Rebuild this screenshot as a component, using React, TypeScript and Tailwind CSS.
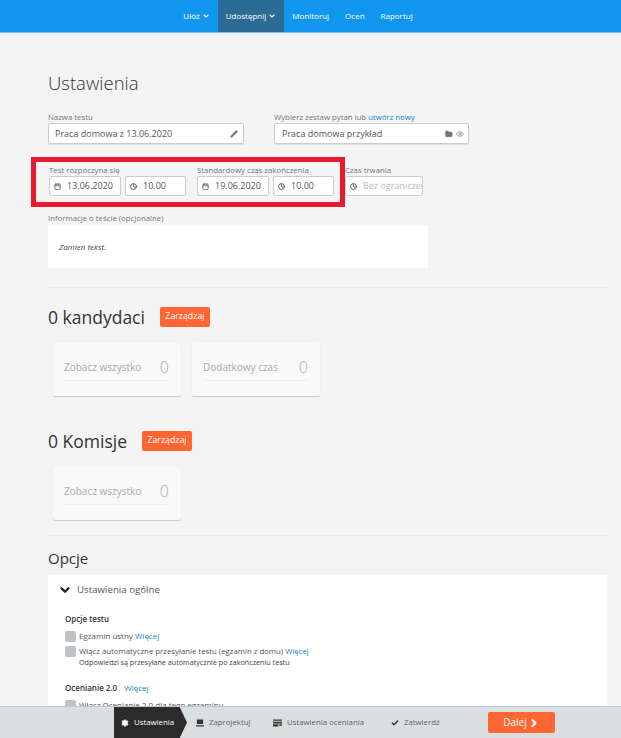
import { ChevronDown, ChevronRight, Pencil, FolderOpen, Eye, Calendar, Clock, Settings, Check } from "lucide-react";

const navItems = [
  { label: "Ułóż", caret: true },
  { label: "Udostępnij", caret: true, active: true },
  { label: "Monitoruj" },
  { label: "Oceń" },
  { label: "Raportuj" },
];

function Label({ children }: { children: React.ReactNode }) {
  return <div className="h-[10px] text-[7.8px] leading-[10px] text-[#777] whitespace-nowrap">{children}</div>;
}

function DateField({ value, time, w }: { value: string; time?: boolean; w: string }) {
  return (
    <div className={`mt-[1px] flex h-[20px] items-center rounded-[2px] border border-[#ccc] bg-white pl-[4px] text-[9px] text-[#555] ${w}`}>
      {time ? <Clock size={7} strokeWidth={3} className="text-[#444]" /> : <Calendar size={7} strokeWidth={3} className="text-[#666]" />}
      <span className="ml-[6px]">{value}</span>
    </div>
  );
}

function StatCard({ label }: { label: string }) {
  return (
    <div className="h-[53px] w-[128px] rounded-[2px] bg-[#f9f9f9] px-[11px] pt-[15px] shadow-[0_1px_1px_#c8c8c8]">
      <div className="flex h-[23px] items-start justify-between border-b border-[#f0f0f0] text-[#aaa]">
        <span className="mt-[2px] text-[10px] leading-[14px]">{label}</span>
        <span className="mr-[1px] text-[16px] leading-[18px] font-light">0</span>
      </div>
    </div>
  );
}

function ManageHeading({ title }: { title: string }) {
  return (
    <div className="flex h-[20px] items-center">
      <h2 className="text-[17.5px] leading-[20px] font-normal text-[#333]">{title}</h2>
      <button className="ml-[15px] h-[20px] w-[50px] rounded-[2px] bg-[#ff6633] text-[8.8px] text-white">Zarządzaj</button>
    </div>
  );
}

function Box() {
  return <span className="h-[11px] w-[11px] shrink-0 rounded-[2px] bg-[#bcc3c8]" />;
}

const designIcon = (
  <svg width="8" height="8" viewBox="0 0 9 8" fill="#333" className="block">
    <path d="M1 0h7v5H1zM0 6.5h9V8H0z" />
  </svg>
);

const gradingIcon = (
  <svg width="9" height="8" viewBox="0 0 10 8" fill="#333" className="block">
    <path d="M0 0h10v1.5H0zM0 2.5h10v2H0zM0 5.5h6V8H0zM7 5.5h3V7H7z" />
  </svg>
);

const steps = [
  { label: "Zaprojektuj", icon: designIcon, w: "w-[77px]" },
  { label: "Ustawienia oceniania", icon: gradingIcon, w: "w-[118px]" },
  { label: "Zatwierdź", icon: <Check size={8} strokeWidth={4} />, w: "w-[67px]" },
];

export default function App() {
  return (
    <div className="relative h-[738px] w-[621px] overflow-hidden bg-[#f4f4f4] font-['Open_Sans','Noto_Sans',sans-serif] text-[#333]">
      <header className="flex h-[33px] justify-center border-b border-[#7cc4f5] bg-[#1196f0] text-[8px] text-white">
        <nav className="ml-[-25px] flex">
          {navItems.map((item) => (
            <div key={item.label} className={`flex items-center gap-[2px] px-[8px] ${item.active ? "bg-[#2b6b96]" : ""}`}>
              {item.label}
              {item.caret && <ChevronDown size={8} strokeWidth={3.5} />}
            </div>
          ))}
        </nav>
      </header>

      <main className="pr-[14px] pl-[48px]">
        <h1 className="mt-[39px] text-[18.5px] leading-[22px] font-light text-[#333]">Ustawienia</h1>

        <div className="mt-[18px] flex gap-[30px]">
          <div className="w-[196px]">
            <Label>Nazwa testu</Label>
            <div className="mt-[1px] flex h-[21px] items-center justify-between rounded-[2px] border border-[#ccc] bg-white pr-[5px] pl-[6px] text-[9px] text-[#555] shadow-[0_1px_1px_#ddd]">
              Praca domowa z 13.06.2020
              <Pencil size={8} fill="#777" className="text-[#777]" />
            </div>
          </div>
          <div className="w-[195px]">
            <Label>Wybierz zestaw pytań lub <span className="text-[#1a86c8]">utwórz nowy</span></Label>
            <div className="mt-[1px] flex h-[21px] items-center justify-between rounded-[2px] border border-[#ccc] bg-white pr-[4px] pl-[7px] text-[9px] text-[#555] shadow-[0_1px_1px_#ddd]">
              Praca domowa przykład
              <span className="flex gap-[3px] text-[#777]">
                <FolderOpen size={8} fill="#777" />
                <Eye size={8} />
              </span>
            </div>
          </div>
        </div>

        <div className="relative mt-[21px] flex">
          <div className="pointer-events-none absolute top-[-8px] left-[-17px] h-[50px] w-[314px] border-[5px] border-[#e8192c]" />
          <div className="ml-[1px] w-[137px]">
            <Label>Test rozpoczyna się</Label>
            <div className="flex gap-[4px]">
              <DateField value="13.06.2020" w="w-[72px]" />
              <DateField value="10.00" time w="w-[61px]" />
            </div>
          </div>
          <div className="ml-[11px] w-[137px]">
            <Label>Standardowy czas zakończenia</Label>
            <div className="flex gap-[4px]">
              <DateField value="19.06.2020" w="w-[72px]" />
              <DateField value="10.00" time w="w-[61px]" />
            </div>
          </div>
          <div className="ml-[11px] w-[78px]">
            <Label>Czas trwania</Label>
            <div className="mt-[1px] flex h-[20px] items-center overflow-hidden rounded-[2px] border border-[#ccc] bg-white pl-[4px] text-[9px] whitespace-nowrap text-[#bbb]">
              <Clock size={7} strokeWidth={3} className="shrink-0 text-[#444]" />
              <span className="ml-[6px]">Bez ograniczeń</span>
            </div>
          </div>
        </div>

        <div className="mt-[17px]">
          <div className="mb-[2px]">
            <Label>Informacje o teście (opcjonalne)</Label>
          </div>
          <div className="h-[43px] w-[380px] bg-white px-[11px] pt-[15px] text-[8px] leading-[14px] text-[#444] italic">Zamień tekst.</div>
        </div>

        <hr className="mt-[19px] border-[#ececec]" />

        <div className="mt-[19px]">
          <ManageHeading title="0 kandydaci" />
        </div>
        <div className="mt-[16px] ml-[5px] flex gap-[11px]">
          <StatCard label="Zobacz wszystko" />
          <StatCard label="Dodatkowy czas" />
        </div>

        <hr className="mt-[16px] border-[#f0f0f0]" />

        <div className="mt-[18px]">
          <ManageHeading title="0 Komisje" />
        </div>
        <div className="mt-[16px] ml-[5px]">
          <StatCard label="Zobacz wszystko" />
        </div>

        <hr className="mt-[15px] border-[#ececec]" />

        <h2 className="mt-[13px] text-[15px] leading-[18px] font-normal text-[#333]">Opcje</h2>
        <section className="mt-[8px] h-[170px] rounded-[2px] bg-white">
          <div className="flex items-center pt-[8px] pl-[10px] text-[9.7px] leading-[14px] text-[#555]">
            <ChevronDown size={14} strokeWidth={4} className="text-[#222]" />
            <span className="ml-[5px]">Ustawienia ogólne</span>
          </div>
          <div className="mt-[16px] pl-[17px] text-[8px] text-[#555]">
            <div className="h-[11px] leading-[11px] font-semibold text-[#333]">Opcje testu</div>
            <div className="mt-[6px] flex items-center gap-[3px]">
              <Box />
              <span>Egzamin ustny <span className="text-[#1a86c8]">Więcej</span></span>
            </div>
            <div className="mt-[4px] flex items-start gap-[3px]">
              <Box />
              <div className="leading-[11px]">
                <div className="text-[7.8px]">Włącz automatyczne przesyłanie testu (egzamin z domu) <span className="text-[#1a86c8]">Więcej</span></div>
                <div className="text-[7.2px] text-[#444]">Odpowiedzi są przesyłane automatycznie po zakończeniu testu</div>
              </div>
            </div>
            <div className="mt-[14px] h-[11px] leading-[11px] font-semibold text-[#333]">Ocenianie 2.0 <span className="ml-[5px] font-normal text-[#1a86c8]">Więcej</span></div>
            <div className="mt-[6px] flex items-center gap-[3px]">
              <Box />
              <span>Włącz Ocenianie 2.0 dla tego egzaminu</span>
            </div>
          </div>
        </section>
      </main>

      <footer className="absolute right-0 bottom-0 left-0 flex h-[32px] items-stretch border-t border-[#c4c8cb] bg-[#dadee1] text-[7.8px] text-[#666]">
        <div className="ml-[114px] flex w-[73px] items-center bg-[#2b2b2b] pl-[7px] text-white [clip-path:polygon(0_0,90%_0,100%_50%,90%_100%,0_100%)]">
          <Settings size={8} fill="#fff" strokeWidth={2.5} />
          <span className="ml-[5px]">Ustawienia</span>
        </div>
        {steps.map((step) => (
          <div key={step.label} className={`flex items-center pl-[9px] ${step.w}`}>
            <span className="text-[#333]">{step.icon}</span>
            <span className="ml-[5px] whitespace-nowrap">{step.label}</span>
          </div>
        ))}
        <button className="my-auto ml-[39px] flex h-[21px] w-[67px] items-center justify-center gap-[1px] rounded-[2px] bg-[#ff6633] text-[10px] text-white">
          Dalej <ChevronRight size={12} strokeWidth={4.5} />
        </button>
      </footer>
    </div>
  );
}
